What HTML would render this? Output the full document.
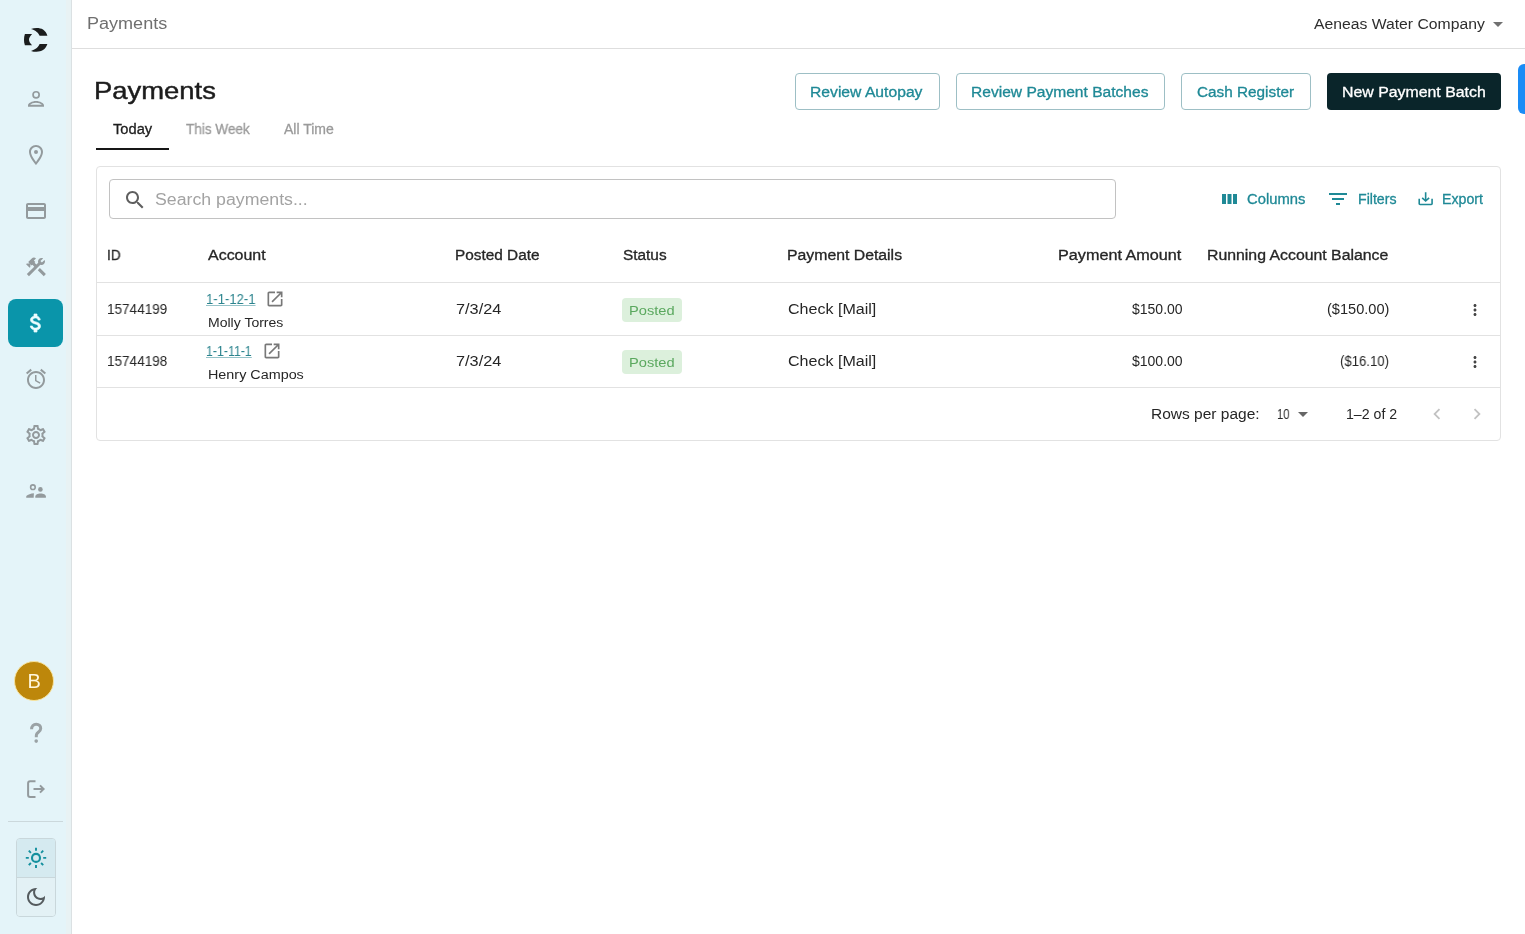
<!DOCTYPE html>
<html><head><meta charset="utf-8"><title>Payments</title><style>
*{margin:0;padding:0;box-sizing:border-box}
html,body{width:1525px;height:934px;overflow:hidden;background:#fff;font-family:"Liberation Sans", sans-serif;position:relative}
.t{position:absolute;white-space:nowrap;will-change:transform}
.ic{position:absolute;display:block}
#sb{position:absolute;left:0;top:0;width:71px;height:934px;background:#e4f4f9}
#sbstrip{position:absolute;left:66px;top:0;width:5px;height:934px;background:#e8f2f4}
#sbline{position:absolute;left:71px;top:0;width:1px;height:934px;background:#dbe1e3}
#act{position:absolute;left:8px;top:299px;width:55px;height:48px;border-radius:8px;background:#0a95aa}
#av{position:absolute;left:14.4px;top:660.6px;width:40.4px;height:40.4px;border-radius:50%;background:#bd870b;border:1.2px solid #f6e3a0;color:#fff6dc;font-size:20px;line-height:39.5px;text-align:center;will-change:transform}
#div1{position:absolute;left:8px;top:821px;width:55px;height:1px;background:#cbd8dc}
#tg{position:absolute;left:16px;top:838px;width:40px;height:79px;border:1px solid #c9d7db;border-radius:4px;overflow:hidden}
#tg1{position:absolute;left:0;top:0;width:38px;height:39px;background:#d5eaf0;border-bottom:1px solid #c9d7db}
#tg2{position:absolute;left:0;top:39px;width:38px;height:39px;background:#e3f1f5}
#topline{position:absolute;left:72px;top:48px;width:1453px;height:1px;background:#dedede}
.ob{position:absolute;border:1px solid #9dbfc5;border-radius:4px;background:#fff}
.db{position:absolute;border-radius:4px;background:#0a252a}
#bluetab{position:absolute;left:1518px;top:64px;width:12px;height:50px;border-radius:6px 0 0 6px;background:#1a8cf6}
#ind{position:absolute;left:96px;top:148px;width:73px;height:2px;background:#161616}
#card{position:absolute;left:96px;top:166px;width:1405px;height:275px;border:1px solid #e2e2e2;border-radius:4px}
#search{position:absolute;left:109px;top:179px;width:1007px;height:40px;border:1px solid #c2c2c2;border-radius:4px}
.hl{position:absolute;left:97px;width:1403px;height:1px;background:#e2e2e2}
.chip{position:absolute;width:60px;height:24px;border-radius:4px;background:#dcf0dc}
</style></head>
<body>
<div id="sb"></div><div id="sbstrip"></div><div id="sbline"></div>
<svg class="ic" style="left:0;top:0;width:72px;height:72px" viewBox="0 0 72 72">
<path fill="#1b1d1e" d="M31.0 28.9 C35 27.5 40 27.6 43 29.5 C45 30.8 46.6 33.1 47.4 35.7 L39.6 35.7 C38.5 33 36 30.3 31.0 28.9 Z"/>
<path fill="#1b1d1e" d="M31.0 50.9 C35 52.2 40 52.1 43 50.1 C45 48.8 46.6 46.5 47.4 44.0 L39.6 44.0 C38.5 46.7 36 49.5 31.0 50.9 Z"/>
<path fill="#1b1d1e" d="M24.9 34.0 L32.1 34.0 C30.2 36.3 29.0 37.9 29.0 39.7 C29.0 41.5 30.2 43.1 32.1 45.3 L24.9 45.3 C24.2 43.5 24.0 41.5 24.0 39.7 C24.0 37.6 24.3 35.7 24.9 34.0 Z"/>
</svg>
<svg class="ic" style="left:24px;top:143px;width:24px;height:24px;" viewBox="0 0 24 24"><path fill="#939a9d" d="M12 2C8.13 2 5 5.13 5 9c0 5.25 7 13 7 13s7-7.75 7-13c0-3.87-3.13-7-7-7zM7 9c0-2.76 2.24-5 5-5s5 2.24 5 5c0 2.88-2.88 7.19-5 9.88C9.92 16.21 7 11.85 7 9zm5 2a2 2 0 1 0 0-4 2 2 0 0 0 0 4z"/></svg>
<svg class="ic" style="left:24px;top:199px;width:24px;height:24px;" viewBox="0 0 24 24"><path fill="#939a9d" d="M20 4H4c-1.11 0-1.99.89-1.99 2L2 18c0 1.11.89 2 2 2h16c1.11 0 2-.89 2-2V6c0-1.11-.89-2-2-2zm0 14H4v-6h16v6zm0-10H4V6h16v2z"/></svg>
<svg class="ic" style="left:24px;top:255px;width:24px;height:24px;" viewBox="0 0 24 24"><path fill="#939a9d" d="M13.7826 15.1719l2.1213-2.1213 5.9963 5.9962-2.1213 2.1213zM17.5 10c1.93 0 3.5-1.57 3.5-3.5 0-.58-.16-1.12-.41-1.6l-2.7 2.7-1.49-1.49 2.7-2.7c-.48-.25-1.02-.41-1.6-.41C15.57 3 14 4.57 14 6.5c0 .41.08.8.21 1.16l-1.85 1.85-1.78-1.78.71-.71-1.41-1.41L12 3.49c-1.17-1.17-3.07-1.17-4.24 0L4.22 7.03l1.41 1.41H2.81l-.71.71 3.54 3.54.71-.71V9.15l1.41 1.41.71-.71 1.78 1.78-7.41 7.41 2.12 2.12L16.34 9.79c.36.13.75.21 1.16.21z"/></svg>
<svg class="ic" style="left:24px;top:367px;width:24px;height:24px;" viewBox="0 0 24 24"><path fill="#939a9d" d="M22 5.72l-4.6-3.86-1.29 1.53 4.6 3.86L22 5.72zM7.88 3.39L6.6 1.86 2 5.71l1.29 1.53 4.59-3.85zM12.5 8H11v6l4.75 2.85.75-1.23-4-2.37V8zM12 4c-4.97 0-9 4.03-9 9s4.02 9 9 9c4.97 0 9-4.03 9-9s-4.03-9-9-9zm0 16c-3.870 0-7-3.13-7-7s3.13-7 7-7 7 3.13 7 7-3.13 7-7 7z"/></svg>
<svg class="ic" style="left:24px;top:423px;width:24px;height:24px;" viewBox="0 0 24 24"><path fill="#939a9d" d="M19.43 12.98c.04-.32.07-.64.07-.98 0-.34-.03-.66-.07-.98l2.11-1.65c.19-.15.24-.42.12-.64l-2-3.46c-.09-.16-.26-.25-.44-.25-.06 0-.12.01-.17.03l-2.49 1c-.52-.4-1.08-.73-1.69-.98l-.38-2.650C14.46 2.18 14.25 2 14 2h-4c-.25 0-.46.18-.49.42l-.38 2.65c-.61.25-1.17.59-1.69.98l-2.49-1c-.06-.02-.12-.03-.18-.03-.17 0-.34.09-.43.25l-2 3.46c-.13.22-.07.49.12.64l2.11 1.65c-.04.32-.07.65-.07.98 0 .33.03.66.07.98l-2.11 1.65c-.19.15-.24.42-.12.64l2 3.46c.09.16.26.25.44.25.06 0 .12-.01.17-.03l2.49-1c.52.4 1.08.73 1.69.98l.38 2.65c.03.24.24.42.49.42h4c.25 0 .46-.18.49-.42l.38-2.65c.61-.25 1.17-.59 1.69-.98l2.49 1c.06.02.12.03.18.03.17 0 .34-.09.43-.25l2-3.46c.12-.22.07-.49-.12-.64l-2.11-1.65zm-1.98-1.71c.04.31.05.52.05.73 0 .21-.02.43-.05.73l-.14 1.13.89.7 1.08.84-.7 1.21-1.27-.51-1.04-.42-.9.68c-.43.32-.84.56-1.25.73l-1.06.43-.16 1.13-.2 1.35h-1.4l-.19-1.35-.16-1.13-1.06-.43c-.43-.18-.83-.41-1.23-.71l-.91-.7-1.06.43-1.27.51-.7-1.21 1.08-.84.89-.7-.14-1.13c-.03-.31-.05-.54-.05-.74s.02-.43.05-.73l.14-1.13-.89-.7-1.08-.84.7-1.21 1.27.51 1.04.42.9-.68c.43-.32.84-.56 1.25-.73l1.06-.43.16-1.13.2-1.35h1.39l.19 1.35.16 1.13 1.06.43c.43.18.83.41 1.23.71l.91.7 1.06-.43 1.27-.51.7 1.21-1.07.85-.89.7.14 1.13zM12 8c-2.21 0-4 1.79-4 4s1.79 4 4 4 4-1.79 4-4-1.79-4-4-4zm0 6c-1.1 0-2-.9-2-2s.9-2 2-2 2 .9 2 2-.9 2-2 2z"/></svg>
<svg class="ic" style="left:24px;top:87px;width:24px;height:24px" viewBox="0 0 24 24">
<circle cx="12.1" cy="7.8" r="3.05" fill="none" stroke="#939a9d" stroke-width="1.7"/>
<path fill="#939a9d" fill-rule="evenodd" d="M4 19.7 V18.4 C4 16.4 8 14.1 12 14.1 C16 14.1 20 16.4 20 18.4 V19.7 Z M6.1 17.8 C7.3 16.7 9.6 15.8 12 15.8 C14.4 15.8 16.7 16.7 17.9 17.8 Z"/>
</svg>
<svg class="ic" style="left:24px;top:479px;width:24px;height:24px" viewBox="0 0 24 24">
<circle cx="8.9" cy="8.2" r="2.3" fill="none" stroke="#939a9d" stroke-width="1.6"/>
<circle cx="16.4" cy="10.4" r="2.3" fill="#939a9d"/>
<path fill="#939a9d" d="M2.2 18.7 L2.3 16.9 C3.8 15.6 6.8 14.6 9.9 14.3 L9.7 18.7 Z"/>
<path fill="#939a9d" d="M11.3 18.7 V17.6 C11.3 15.7 13.8 14.5 16.6 14.5 C19.4 14.5 21.9 15.7 21.9 17.6 V18.7 Z"/>
</svg>
<div id="act"></div>
<svg class="ic" style="left:23.7px;top:311.2px;width:24px;height:24px" viewBox="0 0 24 24"><path fill="#ecfdff" stroke="#ecfdff" stroke-width="0.7" d="M11.8 10.9c-2.27-.59-3-1.2-3-2.15 0-1.09 1.01-1.85 2.7-1.85 1.78 0 2.44.85 2.5 2.1h2.21c-.07-1.72-1.12-3.3-3.21-3.81V3h-3v2.16c-1.94.42-3.5 1.68-3.5 3.61 0 2.310 1.91 3.46 4.7 4.13 2.5.6 3 1.48 3 2.41 0 .69-.49 1.79-2.7 1.79-2.06 0-2.87-.92-2.98-2.1h-2.2c.12 2.19 1.76 3.42 3.68 3.83V21h3v-2.15c1.95-.37 3.5-1.5 3.5-3.55 0-2.84-2.43-3.81-4.7-4.4z"/></svg>
<div id="av">B</div>
<svg class="ic" style="left:0;top:0;width:72px;height:934px" viewBox="0 0 72 934"><path d="M31.6 729.2 C31.6 726 33.6 724.2 36.2 724.2 C38.9 724.2 40.7 726 40.7 728.4 C40.7 731.4 37.3 732.3 36.5 734.6 C36.3 735.2 36.3 736 36.3 737.3" fill="none" stroke="#9aa2a5" stroke-width="3.0"/><circle cx="36.2" cy="741.1" r="1.8" fill="#9aa2a5"/></svg>
<svg class="ic" style="left:0;top:0;width:72px;height:934px" viewBox="0 0 72 934"><path d="M35.5 781.2 H30.1 Q28.1 781.2 28.1 783.2 V794.9 Q28.1 796.9 30.1 796.9 H35.5" fill="none" stroke="#939a9d" stroke-width="2.0"/><path d="M33.5 789 H43.5 M40 785.4 L43.6 789 L40 792.6" fill="none" stroke="#939a9d" stroke-width="2.0"/></svg>
<div id="div1"></div>
<div id="tg"><div id="tg1"></div><div id="tg2"></div></div>
<svg class="ic" style="left:0;top:0;width:72px;height:934px" viewBox="0 0 72 934"><circle cx="36" cy="857.9" r="4.0" fill="none" stroke="#14909e" stroke-width="2.1"/><path d="M43.20 857.90 L46.20 857.90 M41.09 862.99 L43.21 865.11 M36.00 865.10 L36.00 868.10 M30.91 862.99 L28.79 865.11 M28.80 857.90 L25.80 857.90 M30.91 852.81 L28.79 850.69 M36.00 850.70 L36.00 847.70 M41.09 852.81 L43.21 850.69" stroke="#14909e" stroke-width="1.9" stroke-linecap="butt"/></svg>
<svg class="ic" style="left:24px;top:885px;width:24px;height:24px;" viewBox="0 0 24 24"><path fill="#555b5e" d="M9.37 5.51c-.18.64-.27 1.31-.27 1.99 0 4.08 3.32 7.4 7.4 7.4.68 0 1.35-.09 1.99-.27C17.45 17.19 14.93 19 12 19c-3.86 0-7-3.14-7-7 0-2.93 1.81-5.45 4.37-6.49zM12 3c-4.97 0-9 4.03-9 9s4.03 9 9 9 9-4.03 9-9c0-.46-.04-.92-.1-1.36-.98 1.37-2.58 2.26-4.4 2.26-2.98 0-5.4-2.42-5.4-5.4 0-1.81.89-3.42 2.26-4.4-.44-.06-.9-.1-1.36-.1z"/></svg>
<div id="topline"></div>
<div class="t" style="left:87.17px;top:16.0px;font-size:16px;line-height:16px;font-weight:400;color:#6f6f6f;transform:scaleX(1.1277);transform-origin:0 0;">Payments</div>
<div class="t" style="left:1313.60px;top:17.0px;font-size:14px;line-height:14px;font-weight:400;color:#2e2e2e;transform:scaleX(1.1237);transform-origin:0 0;">Aeneas Water Company</div>
<svg class="ic" style="left:1486px;top:12px;width:24px;height:24px;" viewBox="0 0 24 24"><path fill="#707070" d="M7 10l5 5 5-5z"/></svg>
<div class="t" style="left:94.46px;top:79.0px;font-size:24px;line-height:24px;font-weight:400;color:#1c1c1c;transform:scaleX(1.1418);transform-origin:0 0;-webkit-text-stroke:0.45px currentColor;">Payments</div>
<div class="ob" style="left:795px;top:73px;width:145px;height:37px"></div>
<div class="ob" style="left:956px;top:73px;width:209px;height:37px"></div>
<div class="ob" style="left:1181px;top:73px;width:130px;height:37px"></div>
<div class="db" style="left:1327px;top:73px;width:174px;height:37px"></div>
<div class="t" style="left:809.88px;top:85.0px;font-size:14px;line-height:14px;font-weight:400;color:#1f8996;transform:scaleX(1.1202);transform-origin:0 0;-webkit-text-stroke:0.3px currentColor;">Review Autopay</div>
<div class="t" style="left:970.99px;top:85.0px;font-size:14px;line-height:14px;font-weight:400;color:#1f8996;transform:scaleX(1.1122);transform-origin:0 0;-webkit-text-stroke:0.3px currentColor;">Review Payment Batches</div>
<div class="t" style="left:1197.10px;top:85.0px;font-size:14px;line-height:14px;font-weight:400;color:#1f8996;transform:scaleX(1.0939);transform-origin:0 0;-webkit-text-stroke:0.3px currentColor;">Cash Register</div>
<div class="t" style="left:1341.97px;top:85.0px;font-size:14px;line-height:14px;font-weight:400;color:#ffffff;transform:scaleX(1.1332);transform-origin:0 0;-webkit-text-stroke:0.3px currentColor;">New Payment Batch</div>
<div id="bluetab"></div>
<div class="t" style="left:113.00px;top:122.0px;font-size:14px;line-height:14px;font-weight:400;color:#1e1e1e;transform:scaleX(1.0493);transform-origin:0 0;-webkit-text-stroke:0.3px currentColor;">Today</div>
<div class="t" style="left:185.50px;top:122.0px;font-size:14px;line-height:14px;font-weight:400;color:#9a9a9a;transform:scaleX(0.9690);transform-origin:0 0;-webkit-text-stroke:0.3px currentColor;">This Week</div>
<div class="t" style="left:283.50px;top:122.0px;font-size:14px;line-height:14px;font-weight:400;color:#9a9a9a;transform:scaleX(1.0009);transform-origin:0 0;-webkit-text-stroke:0.3px currentColor;">All Time</div>
<div id="ind"></div>
<div id="card"></div>
<div id="search"></div>
<svg class="ic" style="left:123px;top:188px;width:24px;height:24px;" viewBox="0 0 24 24"><path fill="#5f5f5f" d="M15.5 14h-.79l-.28-.27C15.41 12.59 16 11.11 16 9.5 16 5.91 13.09 3 9.5 3S3 5.91 3 9.5 5.91 16 9.5 16c1.61 0 3.09-.59 4.23-1.57l.27.28v.79l5 4.99L20.49 19l-4.99-5zm-6 0C7.01 14 5 11.99 5 9.5S7.01 5 9.5 5 14 7.01 14 9.5 11.99 14 9.5 14z"/></svg>
<div class="t" style="left:155.20px;top:192.0px;font-size:16px;line-height:16px;font-weight:400;color:#a3a3a3;transform:scaleX(1.1078);transform-origin:0 0;">Search payments...</div>
<svg class="ic" style="left:1222px;top:194px;width:15px;height:10px" viewBox="0 0 15 10">
<rect x="0" y="0" width="4" height="10" fill="#1f8996"/><rect x="5.5" y="0" width="4" height="10" fill="#1f8996"/><rect x="11" y="0" width="4" height="10" fill="#1f8996"/></svg>
<div class="t" style="left:1247.40px;top:192.0px;font-size:14px;line-height:14px;font-weight:400;color:#1f8996;transform:scaleX(1.0554);transform-origin:0 0;-webkit-text-stroke:0.3px currentColor;">Columns</div>
<svg class="ic" style="left:1326px;top:187px;width:24px;height:24px;" viewBox="0 0 24 24"><path fill="#1f8996" d="M10 18h4v-2h-4v2zM3 6v2h18V6H3zm3 7h12v-2H6v2z"/></svg>
<div class="t" style="left:1357.59px;top:192.0px;font-size:14px;line-height:14px;font-weight:400;color:#1f8996;transform:scaleX(1.0105);transform-origin:0 0;-webkit-text-stroke:0.3px currentColor;">Filters</div>
<svg class="ic" style="left:1416px;top:190px;width:19.3px;height:17.5px" viewBox="0 0 24 24" preserveAspectRatio="none"><path fill="#1f8996" d="M19 12v7H5v-7H3v7c0 1.1.9 2 2 2h14c1.1 0 2-.9 2-2v-7h-2zm-6 .67l2.59-2.58L17 11.5l-5 5-5-5 1.41-1.41L11 12.67V3h2z"/></svg>
<div class="t" style="left:1441.59px;top:192.0px;font-size:14px;line-height:14px;font-weight:400;color:#1f8996;transform:scaleX(1.0133);transform-origin:0 0;-webkit-text-stroke:0.3px currentColor;">Export</div>
<div class="t" style="left:106.84px;top:248.0px;font-size:14px;line-height:14px;font-weight:400;color:#262626;transform:scaleX(0.9620);transform-origin:0 0;-webkit-text-stroke:0.3px currentColor;">ID</div>
<div class="t" style="left:207.70px;top:248.0px;font-size:14px;line-height:14px;font-weight:400;color:#262626;transform:scaleX(1.1401);transform-origin:0 0;-webkit-text-stroke:0.3px currentColor;">Account</div>
<div class="t" style="left:455.40px;top:248.0px;font-size:14px;line-height:14px;font-weight:400;color:#262626;transform:scaleX(1.0975);transform-origin:0 0;-webkit-text-stroke:0.3px currentColor;">Posted Date</div>
<div class="t" style="left:622.50px;top:248.0px;font-size:14px;line-height:14px;font-weight:400;color:#262626;transform:scaleX(1.0985);transform-origin:0 0;-webkit-text-stroke:0.3px currentColor;">Status</div>
<div class="t" style="left:787.07px;top:248.0px;font-size:14px;line-height:14px;font-weight:400;color:#262626;transform:scaleX(1.1285);transform-origin:0 0;-webkit-text-stroke:0.3px currentColor;">Payment Details</div>
<div class="t" style="left:1057.74px;top:248.0px;font-size:14px;line-height:14px;font-weight:400;color:#262626;transform:scaleX(1.1568);transform-origin:0 0;-webkit-text-stroke:0.3px currentColor;">Payment Amount</div>
<div class="t" style="left:1206.97px;top:248.0px;font-size:14px;line-height:14px;font-weight:400;color:#262626;transform:scaleX(1.1308);transform-origin:0 0;-webkit-text-stroke:0.3px currentColor;">Running Account Balance</div>
<div class="hl" style="top:282px"></div>
<div class="hl" style="top:335px"></div>
<div class="hl" style="top:387px"></div>
<div class="t" style="left:106.53px;top:302.0px;font-size:14px;line-height:14px;font-weight:400;color:#262626;transform:scaleX(0.9674);transform-origin:0 0;">15744199</div>
<div class="t" style="left:206.17px;top:292.0px;font-size:14px;line-height:14px;font-weight:400;color:#2a838d;transform:scaleX(0.9342);transform-origin:0 0;text-decoration:underline;text-decoration-color:#96c3c8;text-underline-offset:1px;">1-1-12-1</div>
<svg class="ic" style="left:264.5px;top:289px;width:20px;height:20px;" viewBox="0 0 24 24"><path fill="#787878" d="M19 19H5V5h7V3H5c-1.11 0-2 .9-2 2v14c0 1.1.89 2 2 2h14c1.1 0 2-.9 2-2v-7h-2v7zM14 3v2h3.59l-9.83 9.83 1.41 1.41L19 6.41V10h2V3h-7z"/></svg>
<div class="t" style="left:207.50px;top:317.0px;font-size:12px;line-height:12px;font-weight:400;color:#262626;transform:scaleX(1.1689);transform-origin:0 0;">Molly Torres</div>
<div class="t" style="left:456.20px;top:302.0px;font-size:14px;line-height:14px;font-weight:400;color:#262626;transform:scaleX(1.1626);transform-origin:0 0;">7/3/24</div>
<div class="chip" style="left:622px;top:298px"></div>
<div class="t" style="left:628.97px;top:304.0px;font-size:13px;line-height:13px;font-weight:400;color:#5aa85e;transform:scaleX(1.1263);transform-origin:0 0;">Posted</div>
<div class="t" style="left:787.70px;top:302.0px;font-size:14px;line-height:14px;font-weight:400;color:#262626;transform:scaleX(1.1467);transform-origin:0 0;">Check [Mail]</div>
<div class="t" style="left:1131.70px;top:302.0px;font-size:14px;line-height:14px;font-weight:400;color:#262626;transform:scaleX(0.9917);transform-origin:0 0;">$150.00</div>
<div class="t" style="left:1327.00px;top:302.0px;font-size:14px;line-height:14px;font-weight:400;color:#262626;transform:scaleX(1.0410);transform-origin:0 0;">($150.00)</div>
<svg class="ic" style="left:1466px;top:300.8px;width:18px;height:18px;" viewBox="0 0 24 24"><path fill="#444" d="M12 8c1.1 0 2-.9 2-2s-.9-2-2-2-2 .9-2 2 .9 2 2 2zm0 2c-1.1 0-2 .9-2 2s.9 2 2 2 2-.9 2-2-.9-2-2-2zm0 6c-1.1 0-2 .9-2 2s.9 2 2 2 2-.9 2-2-.9-2-2-2z"/></svg>
<div class="t" style="left:106.53px;top:354.0px;font-size:14px;line-height:14px;font-weight:400;color:#262626;transform:scaleX(0.9674);transform-origin:0 0;">15744198</div>
<div class="t" style="left:206.22px;top:344.0px;font-size:14px;line-height:14px;font-weight:400;color:#2a838d;transform:scaleX(0.8808);transform-origin:0 0;text-decoration:underline;text-decoration-color:#96c3c8;text-underline-offset:1px;">1-1-11-1</div>
<svg class="ic" style="left:261.5px;top:341px;width:20px;height:20px;" viewBox="0 0 24 24"><path fill="#787878" d="M19 19H5V5h7V3H5c-1.11 0-2 .9-2 2v14c0 1.1.89 2 2 2h14c1.1 0 2-.9 2-2v-7h-2v7zM14 3v2h3.59l-9.83 9.83 1.41 1.41L19 6.41V10h2V3h-7z"/></svg>
<div class="t" style="left:207.50px;top:369.0px;font-size:12px;line-height:12px;font-weight:400;color:#262626;transform:scaleX(1.1971);transform-origin:0 0;">Henry Campos</div>
<div class="t" style="left:456.20px;top:354.0px;font-size:14px;line-height:14px;font-weight:400;color:#262626;transform:scaleX(1.1626);transform-origin:0 0;">7/3/24</div>
<div class="chip" style="left:622px;top:350px"></div>
<div class="t" style="left:628.97px;top:356.0px;font-size:13px;line-height:13px;font-weight:400;color:#5aa85e;transform:scaleX(1.1263);transform-origin:0 0;">Posted</div>
<div class="t" style="left:787.70px;top:354.0px;font-size:14px;line-height:14px;font-weight:400;color:#262626;transform:scaleX(1.1467);transform-origin:0 0;">Check [Mail]</div>
<div class="t" style="left:1131.70px;top:354.0px;font-size:14px;line-height:14px;font-weight:400;color:#262626;transform:scaleX(0.9917);transform-origin:0 0;">$100.00</div>
<div class="t" style="left:1340.40px;top:354.0px;font-size:14px;line-height:14px;font-weight:400;color:#262626;transform:scaleX(0.9382);transform-origin:0 0;">($16.10)</div>
<svg class="ic" style="left:1466px;top:352.8px;width:18px;height:18px;" viewBox="0 0 24 24"><path fill="#444" d="M12 8c1.1 0 2-.9 2-2s-.9-2-2-2-2 .9-2 2 .9 2 2 2zm0 2c-1.1 0-2 .9-2 2s.9 2 2 2 2-.9 2-2-.9-2-2-2zm0 6c-1.1 0-2 .9-2 2s.9 2 2 2 2-.9 2-2-.9-2-2-2z"/></svg>
<div class="t" style="left:1150.89px;top:407.0px;font-size:14px;line-height:14px;font-weight:400;color:#262626;transform:scaleX(1.1075);transform-origin:0 0;">Rows per page:</div>
<div class="t" style="left:1277.29px;top:407.0px;font-size:14px;line-height:14px;font-weight:400;color:#262626;transform:scaleX(0.8116);transform-origin:0 0;">10</div>
<svg class="ic" style="left:1291px;top:402px;width:24px;height:24px;" viewBox="0 0 24 24"><path fill="#666" d="M7 10l5 5 5-5z"/></svg>
<div class="t" style="left:1345.99px;top:407.0px;font-size:14px;line-height:14px;font-weight:400;color:#262626;transform:scaleX(1.0098);transform-origin:0 0;">1–2 of 2</div>
<svg class="ic" style="left:1426px;top:403px;width:22px;height:22px;" viewBox="0 0 24 24"><path fill="#c2c2c2" d="M15.41 16.59L10.83 12l4.58-4.59L14 6l-6 6 6 6 1.41-1.41z"/></svg>
<svg class="ic" style="left:1466px;top:403px;width:22px;height:22px;" viewBox="0 0 24 24"><path fill="#c2c2c2" d="M8.59 16.59L13.17 12 8.59 7.41 10 6l6 6-6 6-1.41-1.41z"/></svg>
</body></html>
